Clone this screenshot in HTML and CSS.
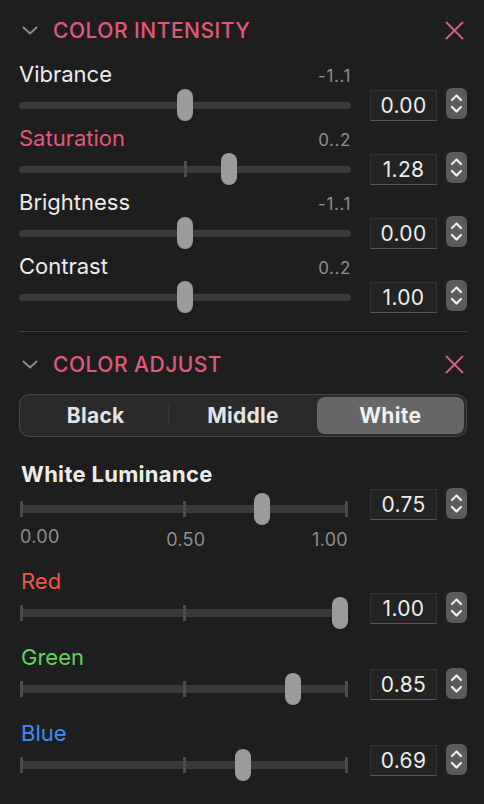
FILE: index.html
```html
<!DOCTYPE html>
<html lang="en">
<head>
    <meta charset="UTF-8">
    <meta name="viewport" content="width=device-width, initial-scale=1.0">
    <title>Color Panel</title>
    <link rel="stylesheet" href="styles.css">
</head>
<body>
    <div class="panel">
        <!-- Color intensity -->
        <div class="group-head">
            <svg class="chevron" viewBox="0 0 16 9"><polyline points="1.5,1.5 8,7.5 14.5,1.5"/></svg>
            <span class="group-title">COLOR INTENSITY</span>
            <svg class="close" viewBox="0 0 21 21"><line x1="2" y1="2" x2="19" y2="19"/><line x1="19" y1="2" x2="2" y2="19"/></svg>
        </div>

        <div class="param">
            <div class="param-label"><span>Vibrance</span><span class="range">-1..1</span></div>
            <div class="param-control">
                <div class="slider" style="--v:0.5"><div class="track"></div><div class="thumb"></div></div>
                <div class="value">0.00</div>
                <div class="stepper"><svg viewBox="0 0 21 31"><polyline points="6,12 10.5,7.5 15,12"/><polyline points="6,19 10.5,23.5 15,19"/></svg></div>
            </div>
        </div>

        <div class="param">
            <div class="param-label"><span class="accent">Saturation</span><span class="range">0..2</span></div>
            <div class="param-control">
                <div class="slider" style="--v:0.64"><div class="track"></div><div class="tick mid"></div><div class="thumb"></div></div>
                <div class="value">1.28</div>
                <div class="stepper"><svg viewBox="0 0 21 31"><polyline points="6,12 10.5,7.5 15,12"/><polyline points="6,19 10.5,23.5 15,19"/></svg></div>
            </div>
        </div>

        <div class="param">
            <div class="param-label"><span>Brightness</span><span class="range">-1..1</span></div>
            <div class="param-control">
                <div class="slider" style="--v:0.5"><div class="track"></div><div class="thumb"></div></div>
                <div class="value">0.00</div>
                <div class="stepper"><svg viewBox="0 0 21 31"><polyline points="6,12 10.5,7.5 15,12"/><polyline points="6,19 10.5,23.5 15,19"/></svg></div>
            </div>
        </div>

        <div class="param">
            <div class="param-label"><span>Contrast</span><span class="range">0..2</span></div>
            <div class="param-control">
                <div class="slider" style="--v:0.5"><div class="track"></div><div class="thumb"></div></div>
                <div class="value">1.00</div>
                <div class="stepper"><svg viewBox="0 0 21 31"><polyline points="6,12 10.5,7.5 15,12"/><polyline points="6,19 10.5,23.5 15,19"/></svg></div>
            </div>
        </div>

        <div class="divider"></div>

        <!-- Color adjust -->
        <div class="group-head second">
            <svg class="chevron" viewBox="0 0 16 9"><polyline points="1.5,1.5 8,7.5 14.5,1.5"/></svg>
            <span class="group-title">COLOR ADJUST</span>
            <svg class="close" viewBox="0 0 21 21"><line x1="2" y1="2" x2="19" y2="19"/><line x1="19" y1="2" x2="2" y2="19"/></svg>
        </div>

        <div class="segmented">
            <div class="segment sep">Black</div>
            <div class="segment">Middle</div>
            <div class="segment active">White</div>
        </div>

        <div class="param lower lum">
            <div class="param-label"><span class="strong">White Luminance</span></div>
            <div class="param-control">
                <div class="slider ticked" style="--v:0.75"><div class="track"></div><div class="tick start"></div><div class="tick mid"></div><div class="tick end"></div><div class="thumb"></div></div>
                <div class="value">0.75</div>
                <div class="stepper"><svg viewBox="0 0 21 31"><polyline points="6,12 10.5,7.5 15,12"/><polyline points="6,19 10.5,23.5 15,19"/></svg></div>
            </div>
            <div class="tick-labels">
                <span>0.00</span><span class="low">0.50</span><span class="low">1.00</span>
            </div>
        </div>

        <div class="param lower red">
            <div class="param-label"><span>Red</span></div>
            <div class="param-control">
                <div class="slider ticked" style="--v:1"><div class="track"></div><div class="tick start"></div><div class="tick mid"></div><div class="tick end"></div><div class="thumb"></div></div>
                <div class="value">1.00</div>
                <div class="stepper"><svg viewBox="0 0 21 31"><polyline points="6,12 10.5,7.5 15,12"/><polyline points="6,19 10.5,23.5 15,19"/></svg></div>
            </div>
        </div>

        <div class="param lower green">
            <div class="param-label"><span>Green</span></div>
            <div class="param-control">
                <div class="slider ticked" style="--v:0.85"><div class="track"></div><div class="tick start"></div><div class="tick mid"></div><div class="tick end"></div><div class="thumb"></div></div>
                <div class="value">0.85</div>
                <div class="stepper"><svg viewBox="0 0 21 31"><polyline points="6,12 10.5,7.5 15,12"/><polyline points="6,19 10.5,23.5 15,19"/></svg></div>
            </div>
        </div>

        <div class="param lower blue">
            <div class="param-label"><span>Blue</span></div>
            <div class="param-control">
                <div class="slider ticked" style="--v:0.69"><div class="track"></div><div class="tick start"></div><div class="tick mid"></div><div class="tick end"></div><div class="thumb"></div></div>
                <div class="value">0.69</div>
                <div class="stepper"><svg viewBox="0 0 21 31"><polyline points="6,12 10.5,7.5 15,12"/><polyline points="6,19 10.5,23.5 15,19"/></svg></div>
            </div>
        </div>
    </div>
</body>
</html>
```

FILE: styles.css
```css
body {
    margin: 0;
    background-color: #1e1e1e;
    font-family: Inter, "Noto Sans", sans-serif;
    color: #ececec;
}
.panel {
    padding: 0 17px 0 19px;
}

/* section headers */
.group-head {
    height: 60px;
    display: flex;
    align-items: center;
    margin-bottom: 2px;
}
.group-head.second {
    margin-top: 2px;
    margin-bottom: 0;
}
.chevron {
    width: 16px;
    height: 9px;
    margin-left: 3px;
    margin-right: 15px;
    fill: none;
    stroke: #8a8a8a;
    stroke-width: 2;
    stroke-linecap: round;
    stroke-linejoin: round;
}
.group-title {
    flex: 1;
    font-size: 21px;
    font-weight: 500;
    color: #e0587a;
    letter-spacing: 0.5px;
}
.close {
    width: 21px;
    height: 21px;
    margin-right: 2px;
    stroke: #e0587a;
    stroke-width: 2;
}
.divider {
    height: 1px;
    background: #3e3e3e;
    margin-top: 18px;
}

/* parameter rows */
.param {
    margin-bottom: 5px;
}
.param-label {
    width: 332px;
    height: 24px;
    display: flex;
    justify-content: space-between;
    align-items: baseline;
    font-size: 22px;
    line-height: 24px;
}
.range {
    font-size: 17px;
    letter-spacing: 0.6px;
    color: #8e8e8e;
}
.accent {
    color: #e0587a;
}
.strong {
    font-weight: 700;
    letter-spacing: 0.3px;
}
.param-control {
    display: flex;
    align-items: center;
    height: 32px;
    margin-top: 3px;
}
.slider {
    position: relative;
    flex: none;
    width: 332px;
    height: 32px;
}
.track {
    position: absolute;
    left: 0;
    right: 0;
    top: 50%;
    height: 7px;
    margin-top: -3.5px;
    border-radius: 4px;
    background: #3a3a3a;
}
.tick {
    position: absolute;
    top: 50%;
    width: 3px;
    height: 16px;
    margin-top: -8px;
    background: #4c4c4c;
}
.tick.start { left: 0; }
.tick.mid { left: calc(50% - 1.5px); }
.tick.end { right: 0; }
.thumb {
    position: absolute;
    top: 0;
    left: calc(var(--v) * (100% - 16px));
    width: 16px;
    height: 32px;
    border-radius: 8px;
    background: #9b9b9b;
}
.value {
    flex: none;
    margin-left: 19px;
    width: 67px;
    height: 31px;
    box-sizing: border-box;
    background: #232323;
    border: 1px solid #333;
    border-bottom-color: #585858;
    font-size: 21px;
    line-height: 29px;
    letter-spacing: 0.3px;
    text-align: center;
    color: #ececec;
}
.stepper {
    flex: none;
    margin-left: 9px;
    margin-bottom: 3px;
    width: 21px;
    height: 31px;
    border-radius: 6px;
    background: #5b5b5b;
}
.stepper svg {
    display: block;
    width: 21px;
    height: 31px;
    fill: none;
    stroke: #f2f2f2;
    stroke-width: 2.2;
    stroke-linecap: round;
    stroke-linejoin: round;
}

/* segmented control */
.segmented {
    display: flex;
    height: 43px;
    box-sizing: border-box;
    border: 1px solid #464646;
    border-radius: 10px;
    background: #2a2a2a;
    padding: 2px;
}
.segment {
    position: relative;
    flex: 1;
    display: flex;
    align-items: center;
    justify-content: center;
    font-size: 21px;
    font-weight: 700;
    letter-spacing: 0.3px;
    color: #e4e4e4;
    border-radius: 8px;
}
.segment.sep::after {
    content: "";
    position: absolute;
    right: 0;
    top: 8px;
    bottom: 8px;
    width: 1px;
    background: #383838;
}
.segment.active {
    background: #676767;
    color: #f0f0f0;
}

/* lower sliders with ticks */
.lower {
    margin-bottom: 16px;
}
.lower .param-label {
    padding-left: 2px;
}
.lower .param-control {
    align-items: flex-start;
    margin-top: 4px;
}
.lower .value {
    margin-left: 22px;
    margin-top: -4px;
}
.lower .stepper {
    margin-top: -5px;
    margin-bottom: 0;
}
.slider.ticked {
    width: 328px;
    margin-left: 1px;
}
.ticked .track {
    left: 1px;
    right: 1px;
    height: 8px;
    margin-top: -4px;
    border-radius: 0;
}
.lum {
    margin-top: 25px;
    margin-bottom: 22px;
}
.lum .param-control {
    margin-top: 7px;
}
.tick-labels {
    width: 328px;
    margin-left: 1px;
    margin-top: 2px;
    height: 20px;
    display: flex;
    justify-content: space-between;
    align-items: flex-start;
    font-size: 18px;
    line-height: 20px;
    letter-spacing: 0.3px;
    color: #8e8e8e;
}
.tick-labels .low {
    margin-top: 3px;
}
.red .param-label { color: #ef5849; }
.green .param-label { color: #5fd35a; }
.blue .param-label { color: #3f8cf2; }
```
